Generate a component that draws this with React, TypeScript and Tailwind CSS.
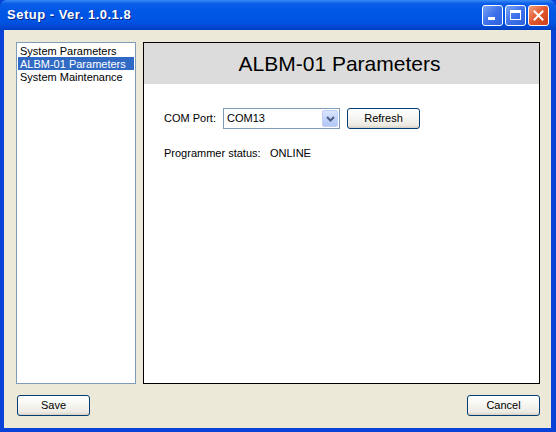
import React from "react";

const font = { fontFamily: '"Liberation Sans", Arial, sans-serif' };

function XPButton({ label, className = "" }: { label: string; className?: string }) {
  return (
    <div
      className={`flex items-center justify-center rounded-[3px] border border-[#003C74] bg-[linear-gradient(180deg,#ffffff_0%,#f7f7f4_40%,#eceae2_85%,#d6d0c5_100%)] text-[11px] text-black ${className}`}
    >
      {label}
    </div>
  );
}

export default function App() {
  return (
    <div className="w-[556px] h-[432px] flex flex-col bg-[#0842D6] overflow-hidden" style={font}>
      {/* Title bar */}
      <div className="h-[30px] flex items-center justify-between pl-[7px] pr-[7px] bg-[linear-gradient(180deg,#3b8cf5_0%,#0a5ee8_12%,#0056e6_40%,#0054e3_70%,#0048d4_90%,#003ec0_100%)] rounded-t-[7px]">
        <span className="text-white font-bold text-[13px] tracking-[0.5px] [text-shadow:1px_1px_0_#0b2a8a]">
          Setup - Ver. 1.0.1.8
        </span>
        <div className="flex gap-[2px]">
          <div className="w-[21px] h-[21px] rounded-[3px] border border-white bg-[linear-gradient(135deg,#7aa4f7_0%,#3f72ea_50%,#2a5fe0_100%)] flex items-end justify-start pl-[5px] pb-[5px]">
            <div className="w-[7px] h-[3px] bg-white" />
          </div>
          <div className="w-[21px] h-[21px] rounded-[3px] border border-white bg-[linear-gradient(135deg,#7aa4f7_0%,#3f72ea_50%,#2a5fe0_100%)] flex items-center justify-center">
            <div className="w-[11px] h-[10px] border border-white border-t-[3px]" />
          </div>
          <div className="w-[21px] h-[21px] rounded-[3px] border border-white bg-[linear-gradient(135deg,#f0a080_0%,#e2562c_50%,#c8401c_100%)] flex items-center justify-center">
            <svg width="11" height="11" viewBox="0 0 11 11">
              <path d="M1.5 1.5 L9.5 9.5 M9.5 1.5 L1.5 9.5" stroke="white" strokeWidth="2" strokeLinecap="square" />
            </svg>
          </div>
        </div>
      </div>

      {/* Body */}
      <div className="flex-1 ml-[4px] mr-[5px] mb-[4px] bg-[#ECE9D8] flex flex-col pt-[12px] pl-[12px] pr-[11px] pb-[12px]">
        <div className="flex-1 flex gap-[7px]">
          {/* List box */}
          <div className="w-[120px] border border-[#7F9DB9] bg-white p-[1px] pt-[1px] text-[11px] text-black leading-[13px]">
            <div className="px-[2px] h-[13px] pt-[1px]">System Parameters</div>
            <div className="px-[2px] h-[13px] pt-[1px] bg-[#316AC5] text-white">ALBM-01 Parameters</div>
            <div className="px-[2px] h-[13px] pt-[1px]">System Maintenance</div>
          </div>

          {/* Right panel */}
          <div className="flex-1 border border-black bg-white flex flex-col">
            <div className="h-[41px] bg-[#DCDCDC] flex items-center justify-center text-[21px] text-black pr-[4px]">
              ALBM-01 Parameters
            </div>
            <div className="pl-[20px] pt-[24px] flex flex-col text-[11px] text-black">
              <div className="flex items-center h-[21px]">
                <span className="w-[59px]">COM Port:</span>
                <div className="w-[117px] h-[21px] border border-[#7F9DB9] bg-white flex items-center justify-between pl-[3px] pr-[1px]">
                  <span>COM13</span>
                  <div className="w-[16px] h-[17px] rounded-[2px] bg-[linear-gradient(180deg,#dce6fd_0%,#c3d4fb_50%,#b3c8f8_100%)] border border-[#c0d0f4] flex items-center justify-center">
                    <svg width="9" height="6" viewBox="0 0 9 6">
                      <path d="M1 1 L4.5 4.5 L8 1" fill="none" stroke="#4D6185" strokeWidth="2" />
                    </svg>
                  </div>
                </div>
                <XPButton label="Refresh" className="ml-[7px] w-[73px] h-[21px] -mt-[1px]" />
              </div>
              <div className="flex items-center mt-[18px] h-[13px]">
                <span className="w-[106px]">Programmer status:</span>
                <span>ONLINE</span>
              </div>
            </div>
          </div>
        </div>

        {/* Bottom buttons */}
        <div className="flex justify-between mt-[11px] pl-[1px]">
          <XPButton label="Save" className="w-[73px] h-[21px]" />
          <XPButton label="Cancel" className="w-[73px] h-[21px]" />
        </div>
      </div>
    </div>
  );
}
